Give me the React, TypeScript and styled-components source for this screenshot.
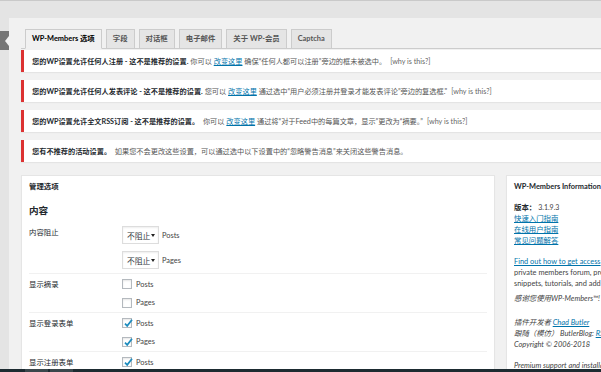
import React from 'react';
import styled, { createGlobalStyle } from 'styled-components';

const font = `Lato, "Noto Sans CJK SC", sans-serif`;

const GlobalStyle = createGlobalStyle`
  html, body {
    margin: 0;
    background: #f1f1f1;
  }
  body {
    font-family: ${font};
    font-size: 7.2px;
    color: #444;
    overflow: hidden;
  }
  * { box-sizing: border-box; }
`;

const Screen = styled.div`
  width: 601px;
  height: 372px;
  overflow: hidden;
  display: flex;
  flex-direction: column;
`;

const TopBand = styled.div`
  height: 18px;
  flex-shrink: 0;
  background: #e4e4e4;
  border-top: 1px solid #c9c9c9;
`;

const Workspace = styled.div`
  flex: 1;
  min-height: 0;
  display: flex;
  overflow: hidden;
`;

const MenuStrip = styled.div`
  width: 9px;
  flex-shrink: 0;
  background: #e4e4e4;
  padding-top: 13px;
`;

const MenuCurrent = styled.div`
  height: 19px;
  background: #767676;
  position: relative;

  &::after {
    content: '';
    position: absolute;
    right: 0;
    top: 50%;
    margin-top: -5px;
    border-style: solid;
    border-width: 5px 4px 5px 0;
    border-color: transparent #f1f1f1 transparent transparent;
  }
`;

const Content = styled.div`
  width: 680px;
  flex-shrink: 0;
  padding: 11px 0 0 12px;
`;

const TabBar = styled.div`
  display: flex;
  gap: 4px;
  padding-left: 4px;
  border-bottom: 1px solid #ccc;
`;

const Tab = styled.div<{ $active?: boolean }>`
  height: 20px;
  margin-bottom: -1px;
  padding: 0 6px;
  line-height: 18px;
  font-size: 7.4px;
  border: 1px solid #ccc;
  border-bottom-color: ${(p) => (p.$active ? '#f1f1f1' : '#ccc')};
  background: ${(p) => (p.$active ? '#f1f1f1' : '#e5e5e5')};
  color: ${(p) => (p.$active ? '#000' : '#555')};
  font-weight: 700;
  white-space: nowrap;
`;

const Notices = styled.div`
  margin-top: 1px;
  display: flex;
  flex-direction: column;
  gap: 8px;
`;

const Notice = styled.div`
  height: 22px;
  display: flex;
  align-items: center;
  padding: 0 8px;
  background: #fff;
  border-left: 3px solid #dc3232;
  box-shadow: 0 1px 1px rgba(0, 0, 0, 0.05);
  white-space: nowrap;
  color: #555;
`;

const Strong = styled.b`
  color: #23282d;
  font-weight: 700;
`;

const Link = styled.a`
  color: #0073aa;
  text-decoration: underline;
`;

const Why = styled.span`
  color: #666;
  margin-left: 4px;
`;

const Columns = styled.div`
  margin-top: 13px;
  display: flex;
  gap: 11px;
  align-items: flex-start;
`;

const Box = styled.div<{ $width: number }>`
  width: ${(p) => p.$width}px;
  flex-shrink: 0;
  background: #fff;
  border: 1px solid #e5e5e5;
  box-shadow: 0 1px 1px rgba(0, 0, 0, 0.04);
  padding: 0 7px 0 7px;
  min-height: 220px;
`;

const BoxTitle = styled.div`
  padding-top: 5px;
  line-height: 11px;
  font-size: 7.4px;
  font-weight: 700;
  color: #23282d;
  white-space: nowrap;
`;

const SectionTitle = styled.div`
  margin: 12px 0 4px;
  font-size: 9.6px;
  line-height: 14px;
  font-weight: 700;
  color: #23282d;
`;

const FormRow = styled.div<{ $last?: boolean }>`
  display: flex;
  border-bottom: ${(p) => (p.$last ? 'none' : '1px solid #f1f1f1')};
`;

const RowLabel = styled.div`
  width: 93px;
  flex-shrink: 0;
  padding-top: 5px;
  line-height: 11px;
  font-size: 7.4px;
  color: #23282d;
`;

const FieldStack = styled.div<{ $gap: number; $pad: string }>`
  display: flex;
  flex-direction: column;
  gap: ${(p) => p.$gap}px;
  padding: ${(p) => p.$pad};
`;

const FieldLine = styled.div<{ $h: number }>`
  height: ${(p) => p.$h}px;
  display: flex;
  align-items: center;
  gap: 3px;
  color: #444;
  font-size: 7.4px;
  white-space: nowrap;
`;

const Select = styled.div`
  width: 37px;
  height: 18px;
  display: flex;
  align-items: center;
  justify-content: space-between;
  padding: 0 3px 0 4px;
  border: 1px solid #ddd;
  box-shadow: inset 0 1px 2px rgba(0, 0, 0, 0.07);
  background: #fff;
  color: #32373c;
  font-size: 7.8px;
  white-space: nowrap;
`;

const Caret = styled.span`
  width: 0;
  height: 0;
  border-style: solid;
  border-width: 3px 2.5px 0 2.5px;
  border-color: #222 transparent transparent transparent;
`;

const CheckBox = styled.div`
  width: 10px;
  height: 10px;
  border: 1px solid #b4b9be;
  background: #fff;
  box-shadow: inset 0 1px 2px rgba(0, 0, 0, 0.1);
  position: relative;
  margin-right: 1px;
`;

const Tick = styled.svg`
  position: absolute;
  left: 0;
  top: -1px;
`;

const Side = styled.div<{ $mt: number }>`
  margin-top: ${(p) => p.$mt}px;
  line-height: 11px;
  font-size: 7.4px;
  white-space: nowrap;
  color: #444;
`;

const Em = styled.div`
  font-style: italic;
`;

const Version = styled.span`
  font-size: 7px;
  margin-left: 2px;
`;

const Taskbar = styled.div`
  height: 3px;
  flex-shrink: 0;
  background: #1d2b31;
  display: flex;
  gap: 2px;
  padding-left: 25px;
`;

const TaskButton = styled.div`
  width: 23px;
  background: #3a474c;
`;

const Check = ({ on }: { on?: boolean }) => (
  <CheckBox>
    {on && (
      <Tick width="11" height="11" viewBox="0 0 11 11">
        <path d="M2 5.6 L4.2 7.9 L9 1.8" fill="none" stroke="#1e8cbe" strokeWidth="1.7" />
      </Tick>
    )}
  </CheckBox>
);

const tabs = ['WP-Members 选项', '字段', '对话框', '电子邮件', '关于 WP-会员', 'Captcha'];

const App = () => {
  return (
    <Screen>
      <GlobalStyle />
      <TopBand />
      <Workspace>
        <MenuStrip>
          <MenuCurrent />
        </MenuStrip>
        <Content>
          <TabBar>
            {tabs.map((t, i) => (
              <Tab key={t} $active={i === 0}>
                {t}
              </Tab>
            ))}
          </TabBar>

          <Notices>
            <Notice>
              <Strong>您的WP设置允许任何人注册 - 这不是推荐的设置.</Strong>&nbsp;你可以&nbsp;
              <Link>改变这里</Link>&nbsp;确保“任何人都可以注册”旁边的框未被选中。
              <Why>[why is this?]</Why>
            </Notice>
            <Notice>
              <Strong>您的WP设置允许任何人发表评论 - 这不是推荐的设置.</Strong>&nbsp;您可以&nbsp;
              <Link>改变这里</Link>&nbsp;通过选中“用户必须注册并登录才能发表评论”旁边的复选框."
              <Why>[why is this?]</Why>
            </Notice>
            <Notice>
              <Strong>您的WP设置允许全文RSS订阅 - 这不是推荐的设置。</Strong>&nbsp; 你可以&nbsp;
              <Link>改变这里</Link>&nbsp;通过将“对于Feed中的每篇文章，显示”更改为“摘要。”
              <Why>[why is this?]</Why>
            </Notice>
            <Notice>
              <Strong>您有不推荐的活动设置。</Strong>&nbsp; 如果您不会更改这些设置，可以通过选中以下设置中的“忽略警告消息”来关闭这些警告消息。
            </Notice>
          </Notices>

          <Columns>
            <Box $width={474}>
              <BoxTitle>管理选项</BoxTitle>
              <SectionTitle>内容</SectionTitle>

              <FormRow>
                <RowLabel>内容阻止</RowLabel>
                <FieldStack $gap={7} $pad="4px 0">
                  <FieldLine $h={18}>
                    <Select>
                      不阻止<Caret />
                    </Select>
                    Posts
                  </FieldLine>
                  <FieldLine $h={18}>
                    <Select>
                      不阻止<Caret />
                    </Select>
                    Pages
                  </FieldLine>
                </FieldStack>
              </FormRow>

              <FormRow>
                <RowLabel>显示摘录</RowLabel>
                <FieldStack $gap={0} $pad="1px 0 0">
                  <FieldLine $h={18.5}>
                    <Check />
                    Posts
                  </FieldLine>
                  <FieldLine $h={18.5}>
                    <Check />
                    Pages
                  </FieldLine>
                </FieldStack>
              </FormRow>

              <FormRow>
                <RowLabel>显示登录表单</RowLabel>
                <FieldStack $gap={0} $pad="1px 0 0">
                  <FieldLine $h={18.5}>
                    <Check on />
                    Posts
                  </FieldLine>
                  <FieldLine $h={18.5}>
                    <Check on />
                    Pages
                  </FieldLine>
                </FieldStack>
              </FormRow>

              <FormRow $last>
                <RowLabel>显示注册表单</RowLabel>
                <FieldStack $gap={0} $pad="1px 0 0">
                  <FieldLine $h={18.5}>
                    <Check on />
                    Posts
                  </FieldLine>
                </FieldStack>
              </FormRow>
            </Box>

            <Box $width={200}>
              <BoxTitle>WP-Members Information</BoxTitle>
              <Side $mt={10}>
                <div>
                  <Strong>版本：</Strong>
                  <Version>3.1.9.3</Version>
                </div>
                <div><Link>快速入门指南</Link></div>
                <div><Link>在线用户指南</Link></div>
                <div><Link>常见问题解答</Link></div>
              </Side>
              <Side $mt={10}>
                <div><Link>Find out how to get access</Link> to our WP-Members</div>
                <div>private members forum, premium code</div>
                <div>snippets, tutorials, and add-on modules!</div>
              </Side>
              <Side $mt={4}>
                <Em>感谢您使用WP-Members™!</Em>
              </Side>
              <Side $mt={13}>
                <Em>插件开发者 <Link>Chad Butler</Link></Em>
                <Em>跟随（模仿） ButlerBlog: <Link>RSS</Link></Em>
                <Em>Copyright © 2006-2018</Em>
              </Side>
              <Side $mt={10}>
                <Em>Premium support and installation service</Em>
              </Side>
            </Box>
          </Columns>
        </Content>
      </Workspace>
      <Taskbar>
        <TaskButton />
        <TaskButton />
      </Taskbar>
    </Screen>
  );
};

export default App;
